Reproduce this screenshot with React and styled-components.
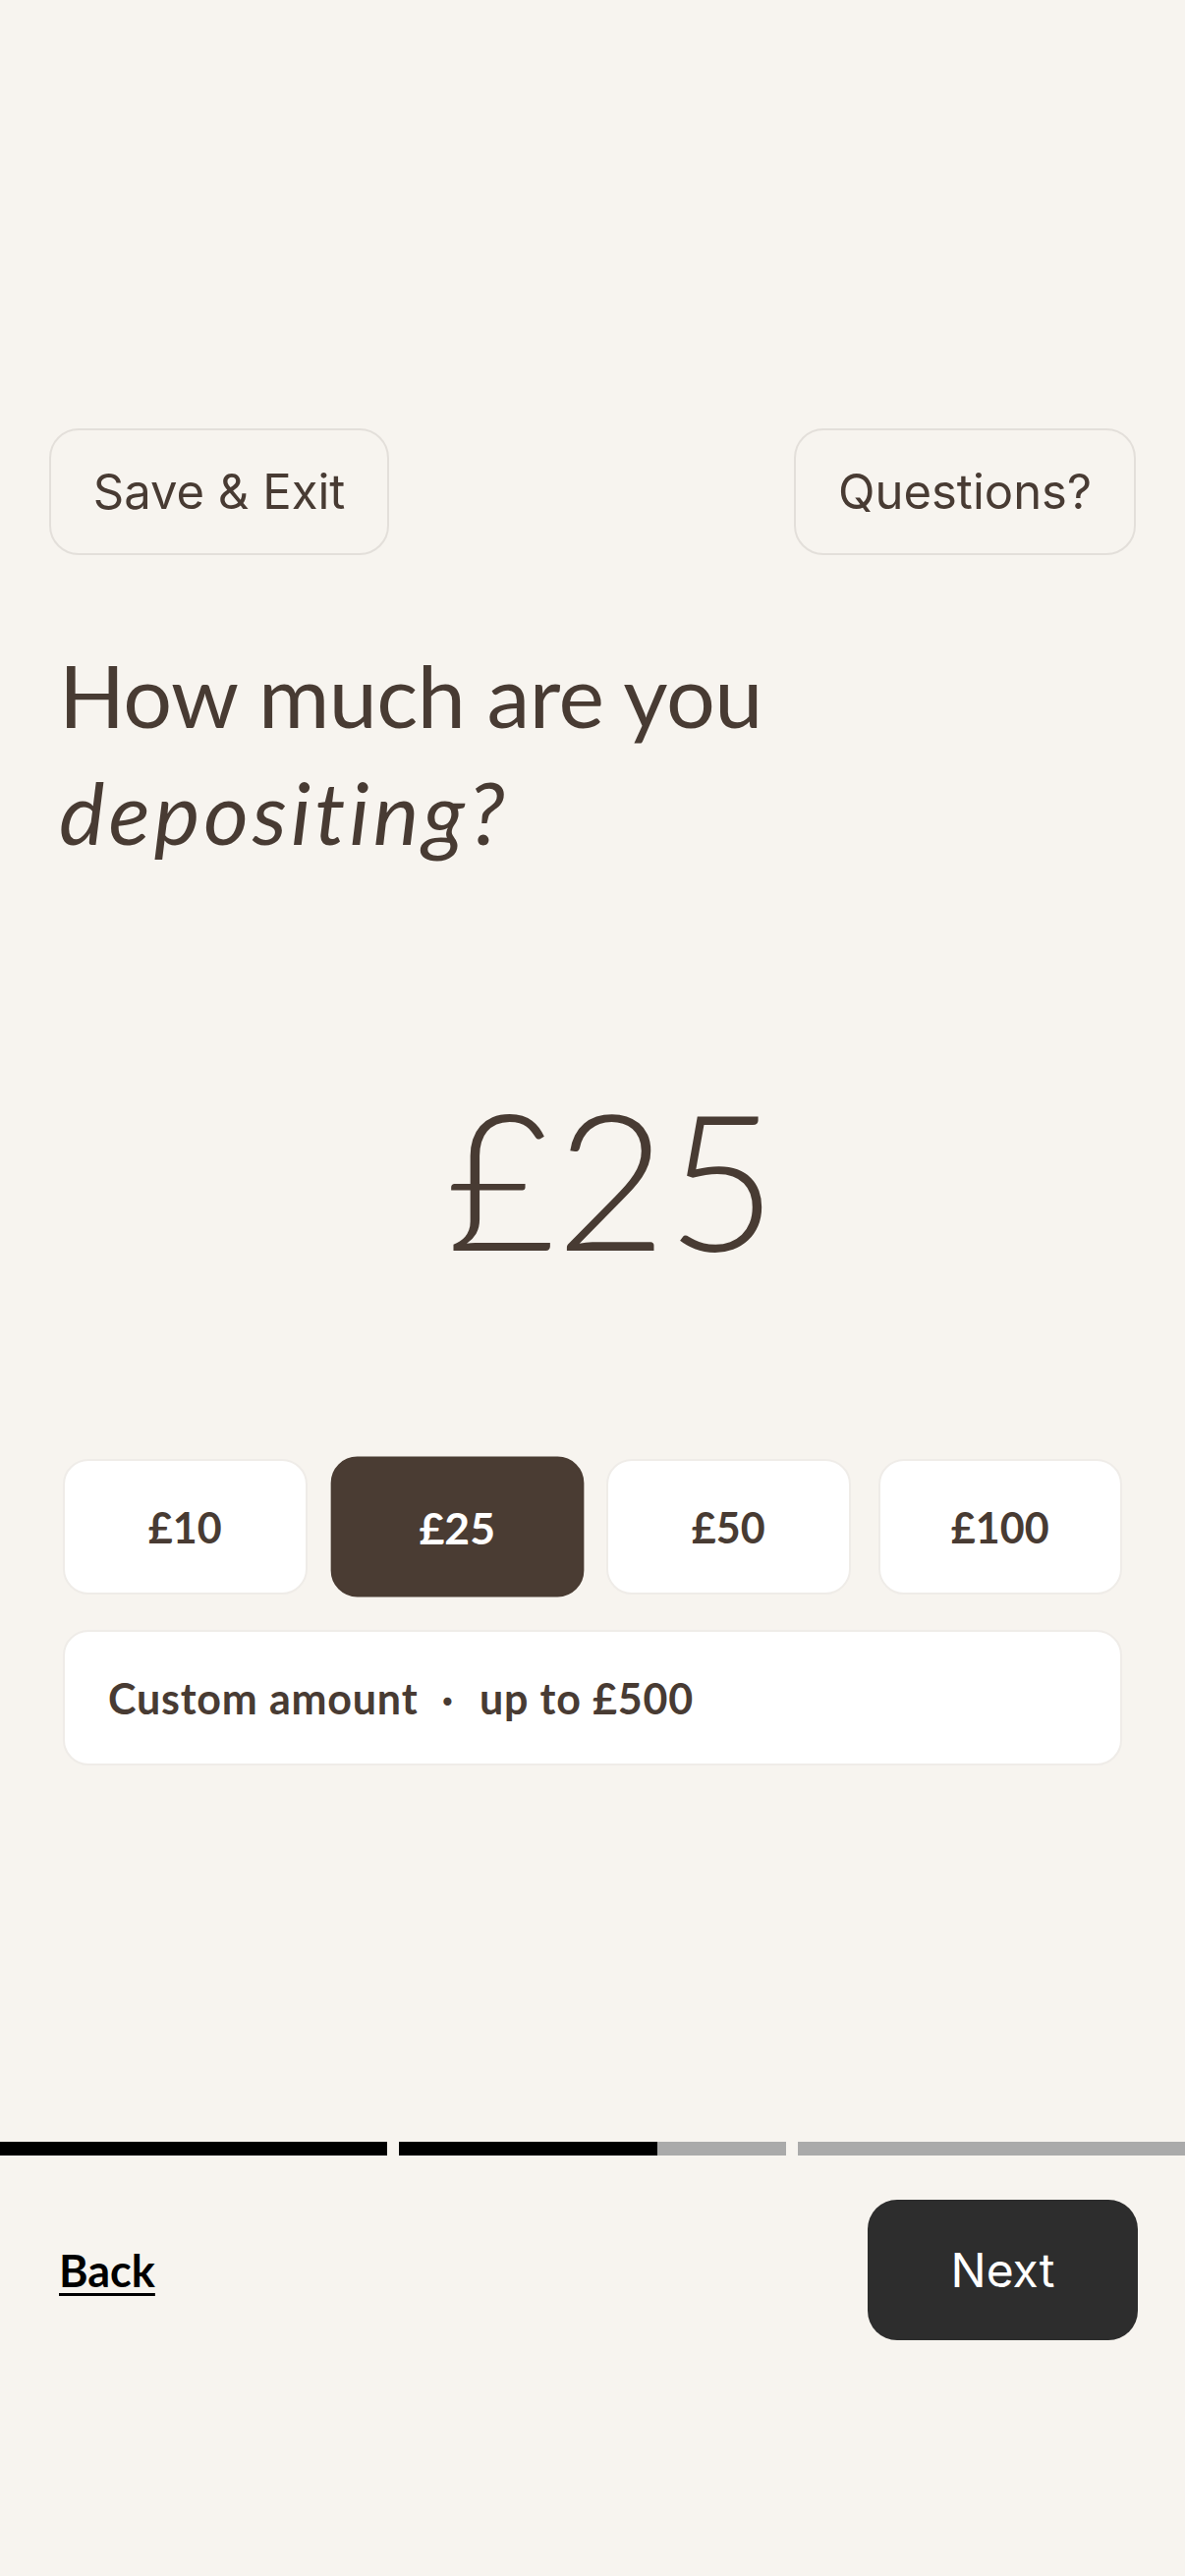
import React, { useState } from "react";
import styled, { createGlobalStyle } from "styled-components";

const Global = createGlobalStyle`
  html, body { margin: 0; padding: 0; background: #f7f4ef; }
  * { box-sizing: border-box; }
  body { font-family: "Lato", "Inter", sans-serif; color: #483b33; }
`;

const Page = styled.div`
  width: 1206px;
  min-height: 2622px;
  display: flex;
  flex-direction: column;
  padding-top: 436px;
`;

const TopBar = styled.div`
  display: flex;
  justify-content: space-between;
  padding: 0 50px;
`;

const GhostButton = styled.button`
  width: ${(p) => p.$w}px;
  height: 129px;
  border: 2px solid #e3dfda;
  border-radius: 30px;
  background: transparent;
  color: #483b33;
  font-family: "Inter", sans-serif;
  font-size: 49px;
  font-weight: 400;
  display: flex;
  align-items: center;
  justify-content: center;
  padding: 0;
`;

const Heading = styled.h1`
  margin: 83px 0 0;
  padding: 0 60px;
  font-family: "Lato", sans-serif;
  font-weight: 400;
  font-size: 88px;
  line-height: 119px;
  color: #483b33;
  letter-spacing: -0.5px;
  em { font-style: italic; letter-spacing: 4px; }
`;

const Amount = styled.div`
  margin-top: 212px;
  text-align: center;
  padding-left: 38px;
  font-family: "Lato", sans-serif;
  font-weight: 300;
  font-size: 194px;
  line-height: 200px;
  color: #483b33;
`;

const Presets = styled.div`
  margin: 187px 64px 0;
  display: grid;
  grid-template-columns: repeat(4, 1fr);
  gap: 28px;
`;

const Preset = styled.button`
  height: 138px;
  border-radius: 26px;
  border: 2px solid ${(p) => (p.$active ? "#4a3c33" : "#efece8")};
  background: ${(p) => (p.$active ? "#4a3c33" : "#ffffff")};
  color: ${(p) => (p.$active ? "#ffffff" : "#483b33")};
  font-family: "Lato", sans-serif;
  font-weight: 700;
  font-size: 43px;
  transform: ${(p) => (p.$active ? "scale(1.035)" : "none")};
  padding: 0;
`;

const Custom = styled.div`
  margin: 36px 64px 0;
  height: 138px;
  border-radius: 26px;
  border: 2px solid #efece8;
  background: #ffffff;
  display: flex;
  align-items: center;
  padding: 0 44px;
  font-family: "Lato", sans-serif;
  font-weight: 700;
  font-size: 43px;
  letter-spacing: 0.8px;
  color: #483b33;
`;

const Dot = styled.span`
  margin: 0 26px 0 24px;
`;

const Progress = styled.div`
  margin-top: 383px;
  display: grid;
  grid-template-columns: repeat(3, 1fr);
  gap: 12px;
`;

const Segment = styled.div`
  height: 14px;
  background: #aaaaaa;
  overflow: hidden;
`;

const Fill = styled.div`
  height: 100%;
  background: #000000;
`;

const Footer = styled.div`
  margin-top: 45px;
  display: flex;
  justify-content: space-between;
  align-items: center;
  padding: 0 48px 0 60px;
`;

const BackLink = styled.a`
  font-family: "Lato", sans-serif;
  font-weight: 700;
  font-size: 45px;
  color: #000;
  text-decoration: underline;
  text-decoration-thickness: 3px;
  text-underline-offset: 6px;
`;

const NextButton = styled.button`
  width: 275px;
  height: 143px;
  border: none;
  border-radius: 30px;
  background: #2d2d2d;
  color: #fff;
  font-family: "Inter", sans-serif;
  font-size: 48px;
  font-weight: 400;
  padding: 0;
`;

const presets = [10, 25, 50, 100];
const progress = [1, 0.667, 0];

export default function App() {
  const [amount, setAmount] = useState(25);
  return (
    <>
      <Global />
      <Page>
        <TopBar>
          <GhostButton $w={346}>Save &amp; Exit</GhostButton>
          <GhostButton $w={348}>Questions?</GhostButton>
        </TopBar>
        <Heading>
          How much are you
          <br />
          <em>depositing?</em>
        </Heading>
        <Amount>£{amount}</Amount>
        <Presets>
          {presets.map((v) => (
            <Preset key={v} $active={v === amount} onClick={() => setAmount(v)}>
              £{v}
            </Preset>
          ))}
        </Presets>
        <Custom>
          Custom amount<Dot>·</Dot>up to £500
        </Custom>
        <Progress>
          {progress.map((p, i) => (
            <Segment key={i}>
              <Fill style={{ width: `${p * 100}%` }} />
            </Segment>
          ))}
        </Progress>
        <Footer>
          <BackLink>Back</BackLink>
          <NextButton>Next</NextButton>
        </Footer>
      </Page>
    </>
  );
}
